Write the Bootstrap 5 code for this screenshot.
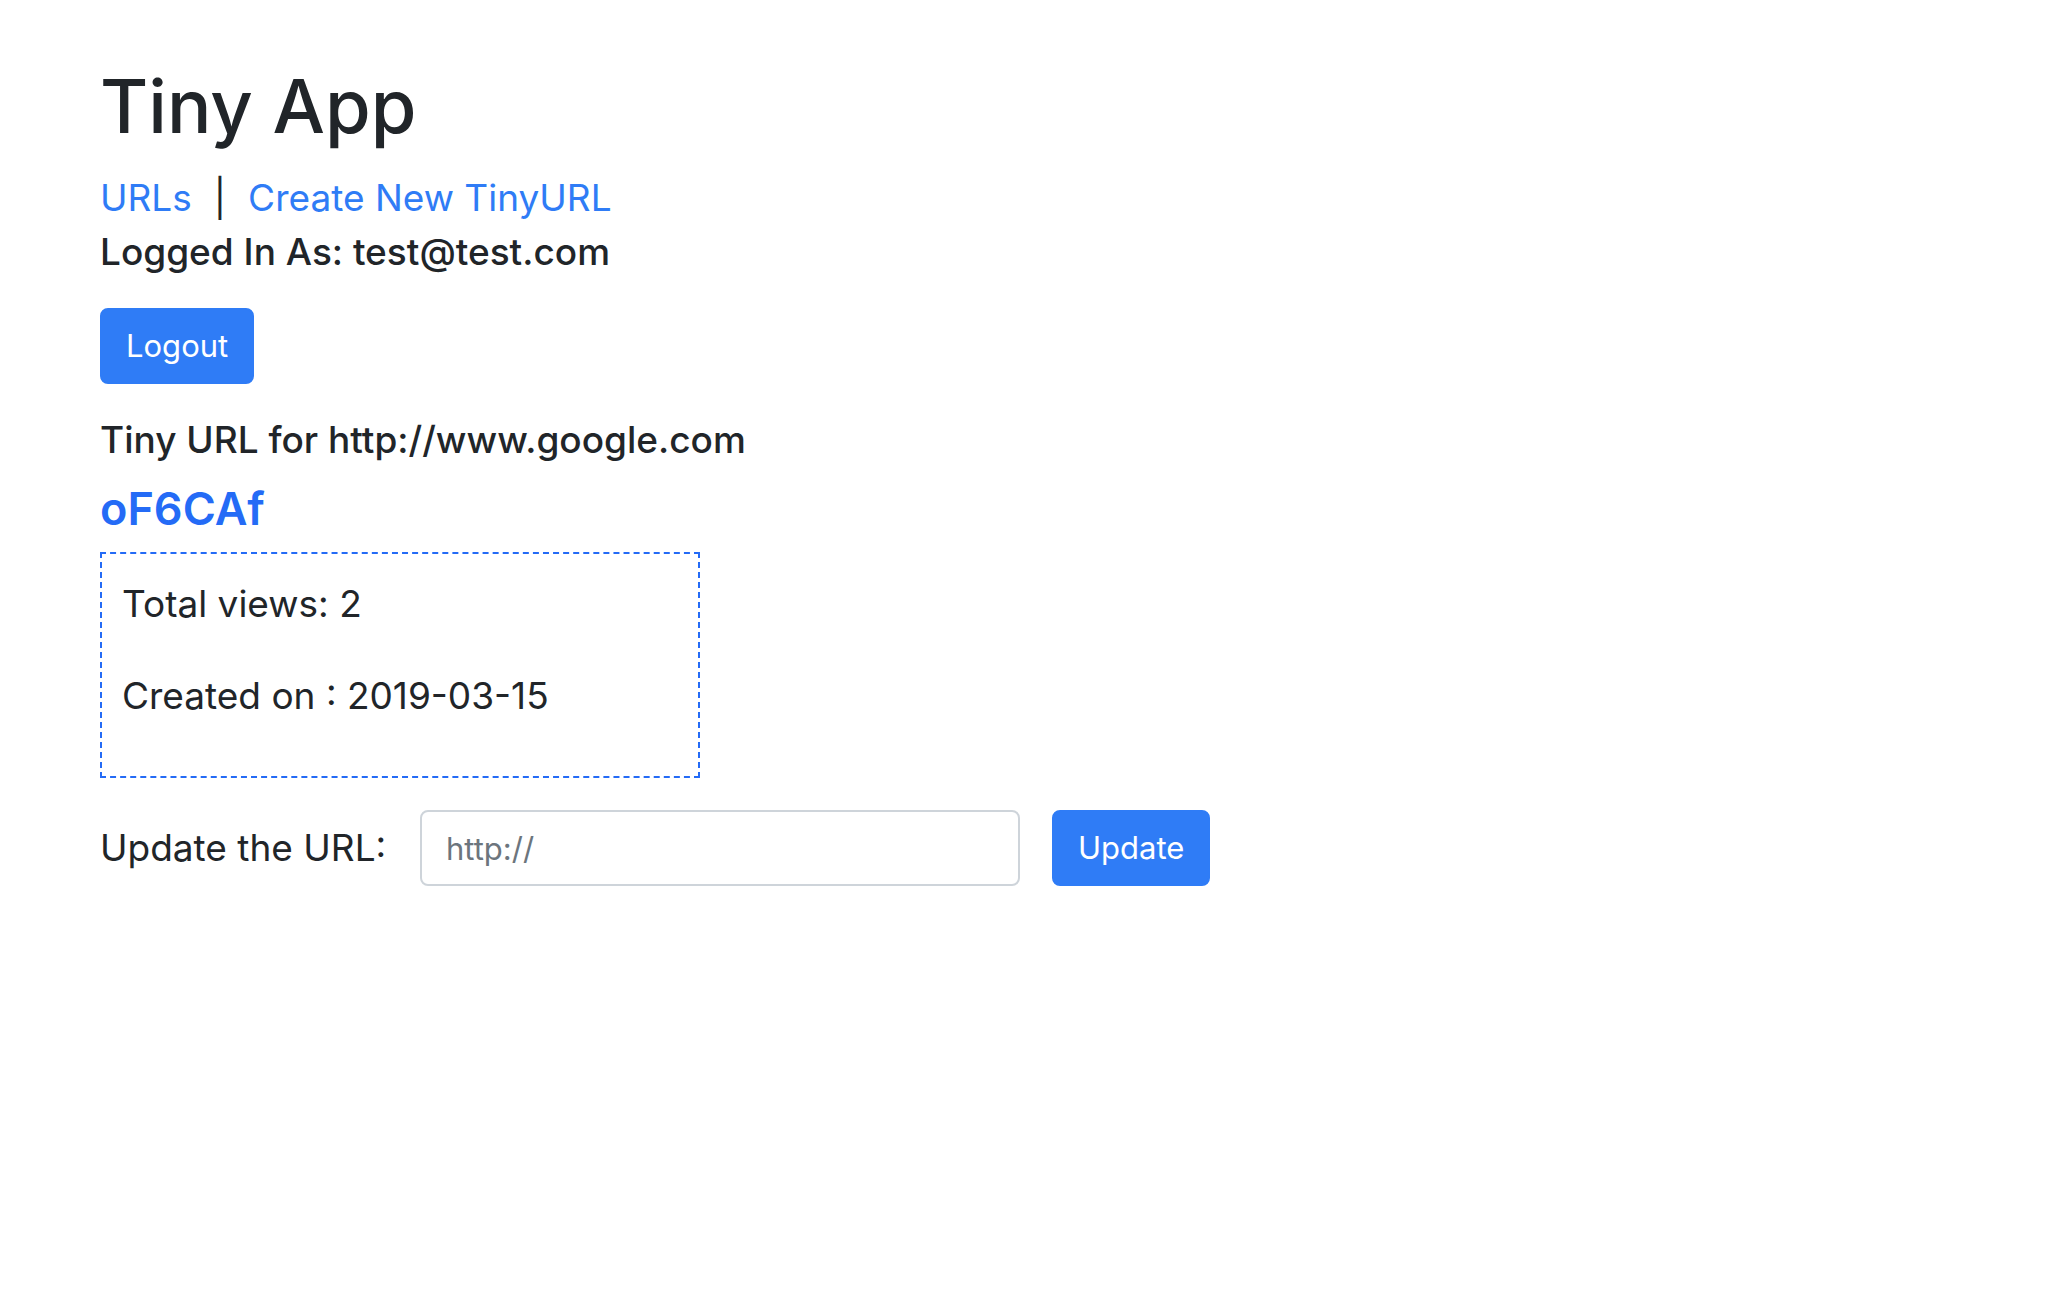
<!DOCTYPE html>
<html lang="en">
<head>
<meta charset="utf-8">
<meta name="viewport" content="width=device-width, initial-scale=1">
<title>Tiny App</title>
<link href="https://cdn.jsdelivr.net/npm/bootstrap@5.3.0/dist/css/bootstrap.min.css" rel="stylesheet">
<style>
  :root { --app-blue: #2f7cf6; --app-accent: #246bf6; }
  body { font-family: Inter, "Liberation Sans", sans-serif; font-size: 37px; line-height: 60px; color: #212529; }
  .app-shell { padding: 58px 100px; }
  .app-title { font-size: 74px; line-height: 96px; margin-bottom: 14px; }
  .app-nav { gap: 22px; }
  .app-nav a { color: var(--app-blue); }
  .app-line { font-size: 37px; line-height: 48px; }
  .short-code { font-size: 45px; line-height: 58px; color: var(--app-accent); margin-bottom: 14px; }
  .stats-box { max-width: 600px; border: 2px dashed var(--app-accent); padding: 20px 20px 18px; }
  .stats-box p { margin-bottom: 32px; }
  .btn-app { --bs-btn-bg: var(--app-blue); --bs-btn-border-color: var(--app-blue); --bs-btn-padding-x: 24px; --bs-btn-padding-y: 12px; --bs-btn-font-size: 31px; --bs-btn-line-height: 48px; --bs-btn-border-width: 2px; --bs-btn-border-radius: 8px; }
  .url-field { width: 600px; height: 76px; font-size: 31px; padding: 12px 24px; border: 2px solid #ced4da; border-radius: 8px; }
  .url-field::placeholder { color: #6c757d; }
  .space-below { margin-bottom: 32px; }
  .tight-below { margin-bottom: 16px; }
  .update-form { gap: 32px; }
  .update-form label { min-width: 288px; }
</style>
<script src="https://cdn.jsdelivr.net/npm/bootstrap@5.3.0/dist/js/bootstrap.bundle.min.js" defer></script>
</head>
<body class="bg-white">
<div class="app-shell">
  <header>
    <h1 class="app-title">Tiny App</h1>
    <nav class="app-nav d-flex flex-wrap">
      <a class="text-decoration-none" href="#urls">URLs</a>
      <span>|</span>
      <a class="text-decoration-none" href="#new">Create New TinyURL</a>
    </nav>
    <h5 class="app-line space-below">Logged In As: test@test.com</h5>
    <form class="d-flex space-below"><button type="button" class="btn btn-primary btn-app">Logout</button></form>
  </header>
  <main>
    <h5 class="app-line tight-below">Tiny URL for http://www.google.com</h5>
    <h4 class="short-code fw-semibold">oF6CAf</h4>
    <div class="stats-box space-below">
      <p>Total views: 2</p>
      <p>Created on : 2019-03-15</p>
    </div>
    <form class="update-form d-flex flex-wrap align-items-center">
      <label for="longURL">Update the URL:</label>
      <input class="form-control url-field" type="text" id="longURL" name="longURL" placeholder="http://">
      <button type="button" class="btn btn-primary btn-app">Update</button>
    </form>
  </main>
</div>
</body>
</html>
